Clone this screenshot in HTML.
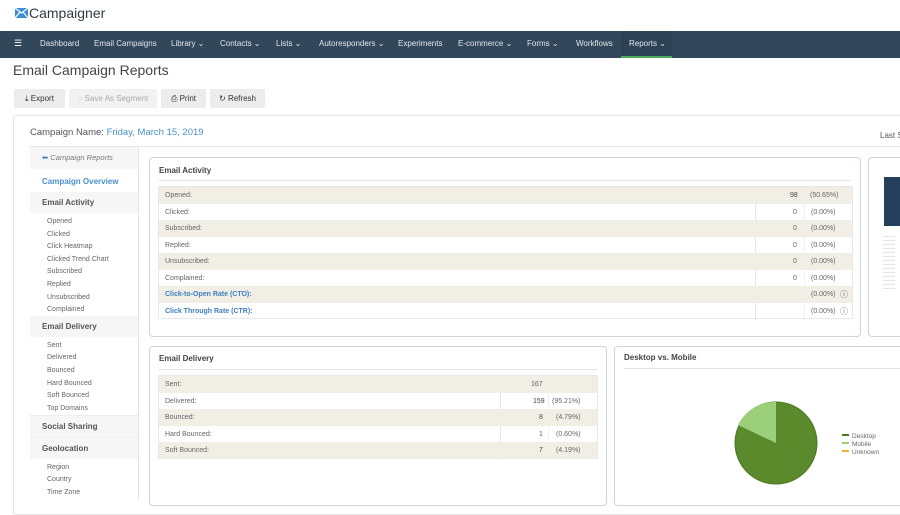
<!DOCTYPE html>
<html><head><meta charset="utf-8"><style>
*{margin:0;padding:0;box-sizing:border-box}
body{width:900px;height:500px;overflow:hidden;background:#fff;font-family:"Liberation Sans",sans-serif;position:relative;color:#555}
.a{position:absolute;white-space:nowrap}
.nav{position:absolute;left:0;top:31px;width:900px;height:27px;background:#33475b}
.nav span{position:absolute;top:8px;font-size:8px;color:#dfe6ec}
.btn{position:absolute;top:89px;height:19px;background:#ececec;font-size:8px;color:#333;text-align:center;line-height:19px;border-radius:2px}
.panel{position:absolute;border:1px solid #cfd4d8;border-radius:4px;background:#fff}
.ph{position:absolute;left:9px;font-size:8px;font-weight:bold;color:#444}
.hl{position:absolute;left:9px;right:9px;height:1px;background:#e3e3e3}
.row{position:absolute;left:0;right:0;font-size:7px;color:#666}
.row span{position:absolute;top:5px}
.tan{background:#f1eee6}
.sb{position:absolute;left:30px;width:109px;border-right:1px solid #e3e3e3}
.sbi{position:absolute;left:47px;font-size:7px;color:#666}
.sbh{position:absolute;left:30px;width:108px;background:#f6f6f6;font-size:8px;font-weight:bold;color:#555;padding-left:12px}
</style></head><body>
<svg class="a" style="left:15px;top:8px" width="13" height="10" viewBox="0 0 13 10"><rect x="0" y="0" width="13" height="10" fill="#3b8ed4"/><path d="M0 0 L6.5 5 L13 0 M0 10 L5 4 M13 10 L8 4" stroke="#fff" stroke-width="1.2" fill="none"/></svg>
<div class="a" style="left:29px;top:5px;font-size:14px;color:#2d3a46">Campaigner</div>
<div class="nav">
<span style="left:14px;top:7px;font-size:9px;color:#fff">☰</span>
<span style="left:40px">Dashboard</span>
<span style="left:94px">Email Campaigns</span>
<span style="left:171px">Library ⌄</span>
<span style="left:220px">Contacts ⌄</span>
<span style="left:276px">Lists ⌄</span>
<span style="left:319px">Autoresponders ⌄</span>
<span style="left:398px">Experiments</span>
<span style="left:458px">E-commerce ⌄</span>
<span style="left:527px">Forms ⌄</span>
<span style="left:576px">Workflows</span>
<div style="position:absolute;left:621px;top:0;width:51px;height:27px;background:#2f4255;border-bottom:2px solid #4cae5c"></div>
<span style="left:629px">Reports ⌄</span>
</div>
<div class="a" style="left:13px;top:62px;font-size:14px;color:#444">Email Campaign Reports</div>
<div class="btn" style="left:14px;width:51px">⤓ Export</div>
<div class="btn" style="left:69px;width:88px;color:#aaa;background:#f2f2f2">◌ Save As Segment</div>
<div class="btn" style="left:161px;width:45px">⎙ Print</div>
<div class="btn" style="left:210px;width:55px">↻ Refresh</div>
<div style="position:absolute;left:13px;top:115px;width:900px;height:400px;border:1px solid #e6e6e6;border-radius:3px"></div>
<div class="a" style="left:30px;top:127px;font-size:9.5px;color:#555">Campaign Name: <span style="color:#4a8fd0">Friday, March 15, 2019</span></div>
<div class="a" style="left:880px;top:131px;font-size:8px;color:#555">Last S</div>
<div style="position:absolute;left:30px;top:146px;width:870px;height:1px;background:#e6e6e6"></div>
<div class="sb" style="top:147px;height:353px"></div>
<div class="sbh" style="top:147px;height:22px;font-weight:normal;font-style:italic;font-size:7.5px;color:#777;line-height:22px"><span style="color:#3d7fc0;font-style:normal">⬅</span> Campaign Reports</div>
<div class="a" style="left:42px;top:177px;font-size:8px;font-weight:bold;color:#4a8fd0">Campaign Overview</div>
<div class="sbh" style="top:192px;height:21px;line-height:21px">Email Activity</div>
<div class="sbi" style="top:218px">Opened</div><div class="sbi" style="top:231px">Clicked</div><div class="sbi" style="top:243px">Click Heatmap</div><div class="sbi" style="top:256px">Clicked Trend Chart</div><div class="sbi" style="top:268px">Subscribed</div><div class="sbi" style="top:281px">Replied</div><div class="sbi" style="top:294px">Unsubscribed</div><div class="sbi" style="top:306px">Complained</div>
<div class="sbh" style="top:316px;height:21px;line-height:21px">Email Delivery</div>
<div class="sbi" style="top:342px">Sent</div><div class="sbi" style="top:354px">Delivered</div><div class="sbi" style="top:367px">Bounced</div><div class="sbi" style="top:380px">Hard Bounced</div><div class="sbi" style="top:392px">Soft Bounced</div><div class="sbi" style="top:405px">Top Domains</div>
<div class="sbh" style="top:415px;height:22px;line-height:22px;border-top:1px solid #eee">Social Sharing</div>
<div class="sbh" style="top:437px;height:22px;line-height:22px;border-top:1px solid #eee">Geolocation</div>
<div class="sbi" style="top:464px">Region</div><div class="sbi" style="top:476px">Country</div><div class="sbi" style="top:489px">Time Zone</div>

<div class="panel" style="left:149px;top:157px;width:712px;height:180px">
<div class="ph" style="top:8px">Email Activity</div>
<div class="hl" style="top:22px"></div>
<div style="position:absolute;left:8px;top:28px;width:695px;height:133px;border:1px solid #e8e8e8">
<div style="position:absolute;left:596px;top:0;width:1px;height:133px;background:#e6e6e6"></div>
<div style="position:absolute;left:645px;top:0;width:1px;height:133px;background:#f0f0f0"></div>
<div class="row tan" style="top:0;height:16.5px"><span style="left:6px">Opened:</span><span style="left:631px;color:#444">98</span><span style="left:651px">(50.65%)</span></div>
<div class="row" style="top:16.5px;height:16.5px"><span style="left:6px">Clicked:</span><span style="left:634px">0</span><span style="left:652px">(0.00%)</span></div>
<div class="row tan" style="top:33px;height:16.5px"><span style="left:6px">Subscribed:</span><span style="left:634px">0</span><span style="left:652px">(0.00%)</span></div>
<div class="row" style="top:49.5px;height:16.5px"><span style="left:6px">Replied:</span><span style="left:634px">0</span><span style="left:652px">(0.00%)</span></div>
<div class="row tan" style="top:66px;height:16.5px"><span style="left:6px">Unsubscribed:</span><span style="left:634px">0</span><span style="left:652px">(0.00%)</span></div>
<div class="row" style="top:82.5px;height:16.5px"><span style="left:6px">Complained:</span><span style="left:634px">0</span><span style="left:652px">(0.00%)</span></div>
<div class="row tan" style="top:99px;height:16.5px"><span style="left:6px;color:#3d7fc0;font-weight:bold">Click-to-Open Rate (CTO):</span><span style="left:652px">(0.00%)</span><span style="left:681px;top:3px;font-size:8px">ⓘ</span></div>
<div class="row" style="top:115.5px;height:16.5px"><span style="left:6px;color:#3d7fc0;font-weight:bold">Click Through Rate (CTR):</span><span style="left:652px">(0.00%)</span><span style="left:681px;top:3px;font-size:8px">ⓘ</span></div>
</div></div>

<div class="panel" style="left:868px;top:157px;width:40px;height:180px">
<div style="position:absolute;left:15px;top:19px;width:30px;height:49px;background:#25405c"></div>
<div style="position:absolute;left:14px;top:78px;width:12px;height:55px;background:repeating-linear-gradient(#e4e4e4 0 1px,#fff 1px 4px)"></div>
</div>

<div class="panel" style="left:149px;top:346px;width:458px;height:160px">
<div class="ph" style="top:7px">Email Delivery</div>
<div class="hl" style="top:22px"></div>
<div style="position:absolute;left:8px;top:28px;width:440px;height:84px;border:1px solid #e8e8e8">
<div style="position:absolute;left:341px;top:0;width:1px;height:84px;background:#e6e6e6"></div>
<div style="position:absolute;left:389px;top:0;width:1px;height:84px;background:#f0f0f0"></div>
<div class="row tan" style="top:0;height:16.6px"><span style="left:6px">Sent:</span><span style="left:372px">167</span></div>
<div class="row" style="top:16.6px;height:16.6px"><span style="left:6px">Delivered:</span><span style="left:374px;color:#444">159</span><span style="left:393px">(95.21%)</span></div>
<div class="row tan" style="top:33.2px;height:16.6px"><span style="left:6px">Bounced:</span><span style="left:380px;color:#444">8</span><span style="left:397px">(4.79%)</span></div>
<div class="row" style="top:49.8px;height:16.6px"><span style="left:6px">Hard Bounced:</span><span style="left:380px">1</span><span style="left:397px">(0.60%)</span></div>
<div class="row tan" style="top:66.4px;height:16.6px"><span style="left:6px">Soft Bounced:</span><span style="left:380px;color:#444">7</span><span style="left:397px">(4.19%)</span></div>
</div></div>

<div class="panel" style="left:614px;top:346px;width:300px;height:160px">
<div class="ph" style="top:6px">Desktop vs. Mobile</div>
<div class="hl" style="top:21px;right:0"></div>
</div>
<svg class="a" style="left:720px;top:395px" width="170" height="100">
<circle cx="56" cy="48" r="41" fill="#5a8a2c" stroke="#4d7a24" stroke-width="1"/>
<path d="M56 48 L56 7 A41 41 0 0 0 18 30 Z" fill="#9ccf7a"/>
<line x1="122" y1="40" x2="129" y2="40" stroke="#4b7a24" stroke-width="2"/>
<line x1="122" y1="48" x2="129" y2="48" stroke="#9ccf7a" stroke-width="2"/>
<line x1="122" y1="56" x2="129" y2="56" stroke="#f0b030" stroke-width="2"/>
<text x="132" y="43" font-size="6.5" fill="#666" font-family="Liberation Sans">Desktop</text>
<text x="132" y="51" font-size="6.5" fill="#666" font-family="Liberation Sans">Mobile</text>
<text x="132" y="59" font-size="6.5" fill="#666" font-family="Liberation Sans">Unknown</text>
</svg>
</body></html>
